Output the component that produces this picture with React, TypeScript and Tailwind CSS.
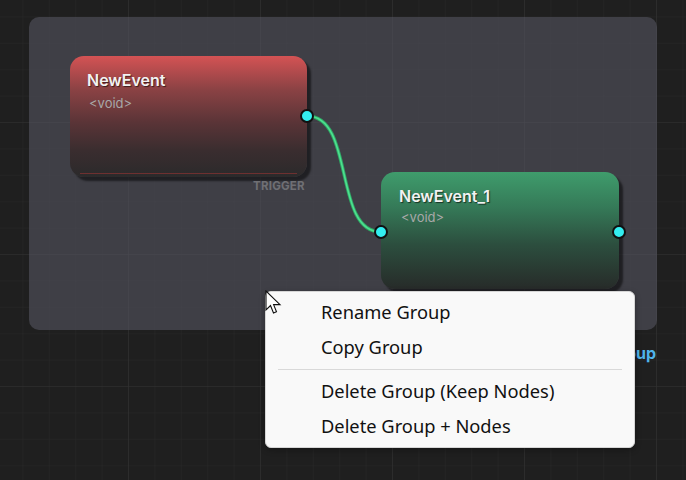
import React from "react"

function Grid() {
  return (
    <svg className="absolute inset-0 h-full w-full" width="686" height="480">
      <defs>
        <pattern id="minor" x="-3" y="-9" width="26.4" height="26.4" patternUnits="userSpaceOnUse">
          <path d="M26.4 0 V26.4 M0 26.4 H26.4" stroke="#282828" strokeWidth="1" fill="none" />
        </pattern>
        <pattern id="major" x="-3" y="-9" width="132" height="132" patternUnits="userSpaceOnUse">
          <path d="M132 0 V132 M0 132 H132" stroke="#313131" strokeWidth="1.2" fill="none" />
        </pattern>
      </defs>
      <rect width="686" height="480" fill="url(#minor)" />
      <rect width="686" height="480" fill="url(#major)" />
    </svg>
  )
}

function Port({ className }: { className: string }) {
  return (
    <span
      className={`absolute h-[14px] w-[14px] -translate-x-1/2 -translate-y-1/2 rounded-full border-[2.5px] border-[#111] bg-[#33eef0] ${className}`}
    />
  )
}

function Cursor() {
  return (
    <svg className="absolute left-[265px] top-[290px]" width="20" height="28" viewBox="0 0 20 28">
      <path
        d="M1 1 L1 20 L5.5 15.5 L8.5 23 L11.5 21.8 L8.6 14.6 L15 14.6 Z"
        fill="#fff"
        stroke="#111"
        strokeWidth="1.1"
      />
    </svg>
  )
}

function MenuItem({ label }: { label: string }) {
  return <div className="h-[35px] pl-[55px] text-[18.3px] leading-[34px] text-[#111]">{label}</div>
}

export default function App() {
  return (
    <div
      className="relative h-[480px] w-[686px] overflow-hidden bg-[#1f1f1f]"
      style={{ fontFamily: "Inter, 'Noto Sans', sans-serif" }}
    >
      <Grid />

      {/* group */}
      <div className="absolute left-[29px] top-[17px] h-[313px] w-[628px] rounded-[10px] bg-[#5a5a66]/55" />
      <div className="absolute right-[30px] top-[341px] text-[16px] font-bold text-[#4fb3ea]">Group</div>

      {/* edge */}
      <svg className="absolute inset-0" width="686" height="480">
        <path d="M307 116 C355 116 333 232 381 232" stroke="#2fa866" strokeWidth="3.4" fill="none" />
        <path d="M307 116 C355 116 333 232 381 232" stroke="#4ee08f" strokeWidth="1.6" fill="none" />
      </svg>

      {/* trigger node */}
      <div className="absolute left-[70px] top-[56px] h-[121px] w-[237px] rounded-[14px] bg-[linear-gradient(180deg,#d45354_0%,#8a4244_28%,#5a3437_55%,#3a2d2f_78%,#2b2a2b_100%)] shadow-[4px_4px_2px_rgba(0,0,0,0.5)]">
        <div className="absolute bottom-[3px] left-[10px] right-[10px] h-px bg-[#6e3030]" />
        <div className="pl-[17px] pt-[15px] text-[16px] font-semibold leading-[19px] text-[#f2f2f2] [text-shadow:1px_1px_1px_rgba(0,0,0,0.6)]">
          NewEvent
        </div>
        <div className="pl-[19px] pt-[5px] text-[13px] leading-[16px] text-[#a8a8a8]">&lt;void&gt;</div>
      </div>
      <div className="absolute left-[253px] top-[178px] text-[11.5px] font-bold tracking-[0.02em] text-[#6f6f74]">TRIGGER</div>
      <Port className="left-[307px] top-[116px]" />

      {/* second node */}
      <div className="absolute left-[381px] top-[172px] h-[117px] w-[238px] rounded-[14px] bg-[linear-gradient(180deg,#3f9c6c_0%,#357a58_30%,#2c4e3e_62%,#272b29_100%)] shadow-[4px_4px_2px_rgba(0,0,0,0.5)]">
        <div className="pl-[18px] pt-[15px] text-[16px] font-semibold leading-[19px] text-[#f2f2f2] [text-shadow:1px_1px_1px_rgba(0,0,0,0.6)]">
          NewEvent_1
        </div>
        <div className="pl-[20px] pt-[3px] text-[13px] leading-[16px] text-[#a8a8a8]">&lt;void&gt;</div>
      </div>
      <Port className="left-[381px] top-[232px]" />
      <Port className="left-[619px] top-[232px]" />

      {/* context menu */}
      <div
        className="absolute left-[265px] top-[291px] flex w-[370px] flex-col rounded-[6px] border border-[#d6d6d6] bg-[#f9f9f9] py-[3px] shadow-[0_2px_6px_rgba(0,0,0,0.3)]"
        style={{ fontFamily: "'Noto Sans', 'Open Sans', sans-serif" }}
      >
        <MenuItem label="Rename Group" />
        <MenuItem label="Copy Group" />
        <div className="mx-[12px] my-[4px] h-px bg-[#d9d9d9]" />
        <MenuItem label="Delete Group (Keep Nodes)" />
        <MenuItem label="Delete Group + Nodes" />
      </div>
      <Cursor />
    </div>
  )
}
